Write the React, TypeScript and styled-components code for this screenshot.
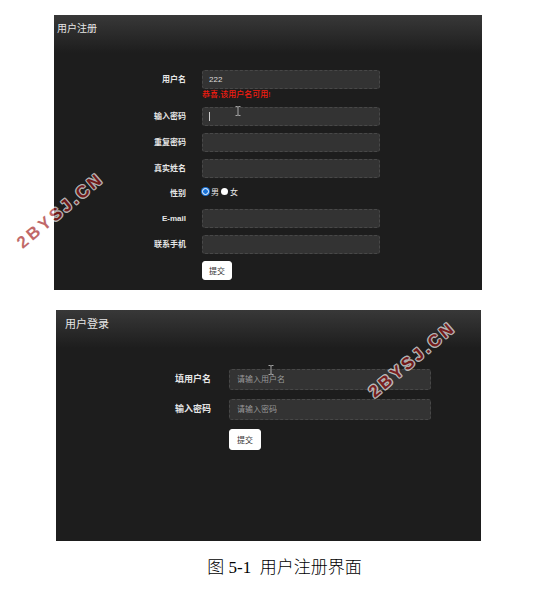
import { ReactNode } from 'react';
import styled, { createGlobalStyle } from 'styled-components';

const App = () => (
  <Page>
    <GlobalStyle />
    <RegisterPanel>
      <PanelTitle $size={10} $indent={3}>用户注册</PanelTitle>
      <RegisterForm onSubmit={e => e.preventDefault()}>
        <Label htmlFor="username">用户名</Label>
        <Field>
          <TextInput id="username" defaultValue="222" />
          <Hint>恭喜,该用户名可用!</Hint>
        </Field>
        <Label htmlFor="password">输入密码</Label>
        <Field>
          <TextInput id="password" type="password" />
          <Caret />
          <Pointer $left={33} $top={-1}><IBeam /></Pointer>
        </Field>
        <Row id="repeat" label="重复密码" type="password" />
        <Row id="realname" label="真实姓名" />
        <GroupLabel id="gender">性别</GroupLabel>
        <RadioGroup role="radiogroup" aria-labelledby="gender">
          <RadioLabel><Radio type="radio" name="gender" defaultChecked />男</RadioLabel>
          <RadioLabel><Radio type="radio" name="gender" />女</RadioLabel>
        </RadioGroup>
        <Row id="email" label="E-mail" type="email" />
        <Row id="phone" label="联系手机" type="tel" />
        <Submit type="submit">提交</Submit>
      </RegisterForm>
      <Watermark $left={-47} $top={186}>2BYSJ.CN</Watermark>
    </RegisterPanel>

    <LoginPanel>
      <PanelTitle $size={11} $indent={9}>用户登录</PanelTitle>
      <LoginForm onSubmit={e => e.preventDefault()}>
        <Label htmlFor="loginname">填用户名</Label>
        <Field>
          <TextInput id="loginname" placeholder="请输入用户名" />
          <Pointer $left={39} $top={-4}><IBeam /></Pointer>
        </Field>
        <Row id="loginpass" label="输入密码" type="password" placeholder="请输入密码" />
        <Submit type="submit">提交</Submit>
      </LoginForm>
      <Watermark $left={303} $top={40}>2BYSJ.CN</Watermark>
    </LoginPanel>

    <Caption>图 5-1  用户注册界面</Caption>
  </Page>
);

interface RowProps {
  id: string;
  label: ReactNode;
  type?: string;
  placeholder?: string;
}

const Row = ({ id, label, type = 'text', placeholder }: RowProps) => (
  <>
    <Label htmlFor={id}>{label}</Label>
    <Field>
      <TextInput id={id} type={type} placeholder={placeholder} />
    </Field>
  </>
);

const IBeam = () => (
  <svg width="6" height="10" viewBox="0 0 6 10" fill="none" stroke="#b4b4b4" aria-hidden="true">
    <path d="M0.5 0.5H2.2L3 1L3.8 0.5H5.5M3 1V9M0.5 9.5H2.2L3 9L3.8 9.5H5.5" strokeWidth="0.9" />
  </svg>
);

const GlobalStyle = createGlobalStyle`
  * {
    box-sizing: border-box;
  }

  body {
    margin: 0;
    background: #fff;
    font-family: "Liberation Sans", "Noto Sans CJK SC", sans-serif;
  }
`;

const Page = styled.main`
  padding: 15px 0 8px;
  overflow: hidden;
`;

const Panel = styled.section`
  position: relative;
  background: linear-gradient(#383838, #1d1d1d 38px);
  color: #e6e6e6;
`;

const RegisterPanel = styled(Panel)`
  margin: 0 75px 20px 54px;
  padding-bottom: 10px;
`;

const LoginPanel = styled(Panel)`
  margin: 0 76px 0 56px;
  padding-bottom: 91px;
`;

const PanelTitle = styled.h2<{ $size: number; $indent: number }>`
  margin: 0;
  padding: 6px 0 0 ${props => props.$indent}px;
  height: 38px;
  font-size: ${props => props.$size}px;
  font-weight: 400;
  line-height: 16px;
`;

const Form = styled.form`
  display: grid;
  align-items: start;
`;

const Label = styled.label`
  grid-column: 1;
  text-align: right;
  font-weight: 700;
`;

const GroupLabel = styled.span`
  grid-column: 1;
  text-align: right;
  font-weight: 700;
  line-height: 17px;
`;

const Field = styled.div`
  position: relative;
`;

const TextInput = styled.input`
  display: block;
  width: 100%;
  padding: 0 6px;
  border: 1px dashed #484848;
  border-radius: 3px;
  outline: none;
  background: #333;
  color: #ddd;
  font-family: inherit;
  font-size: 8px;

  &::placeholder {
    color: #999;
    opacity: 1;
  }
`;

const Submit = styled.button`
  grid-column: 2;
  justify-self: start;
  padding: 0 6px;
  border: 1px solid #fff;
  border-radius: 3px;
  background: #fff;
  color: #333;
  font-family: inherit;
  font-size: 8px;
`;

const RegisterForm = styled(Form)`
  grid-template-columns: 132fr 178fr 86fr;
  gap: 7px 16px;
  padding-top: 17px;
  font-size: 8px;

  ${Label} {
    line-height: 19px;
  }

  ${TextInput}, ${Submit} {
    height: 19px;
  }
`;

const LoginForm = styled(Form)`
  grid-template-columns: 155fr 202fr 32fr;
  gap: 9px 18px;
  padding-top: 21px;
  font-size: 9px;

  ${Label} {
    line-height: 21px;
  }

  ${TextInput}, ${Submit} {
    height: 21px;
    padding: 0 7px;
  }
`;

const Hint = styled.p`
  margin: 0;
  color: #f01c10;
  font-size: 8px;
  font-weight: 500;
  line-height: 11px;
`;

const Caret = styled.span`
  position: absolute;
  left: 7px;
  top: 5px;
  width: 1px;
  height: 9px;
  background: #ccc;
`;

const Pointer = styled.span<{ $left: number; $top: number }>`
  position: absolute;
  left: ${props => props.$left}px;
  top: ${props => props.$top}px;
  line-height: 0;
  pointer-events: none;
`;

const RadioGroup = styled.div`
  display: flex;
  gap: 2px;
  height: 17px;
`;

const RadioLabel = styled.label`
  display: flex;
  align-items: center;
  gap: 2px;
  height: 13px;
`;

const Radio = styled.input`
  appearance: none;
  width: 7px;
  height: 7px;
  margin: 0;
  border-radius: 50%;
  background: #fff;

  &:checked {
    border: 1px solid #fff;
    background: #1a73d8;
    box-shadow: 0 0 0 1px #1a73d8;
  }
`;

const Watermark = styled.span<{ $left: number; $top: number }>`
  position: absolute;
  left: ${props => props.$left}px;
  top: ${props => props.$top}px;
  transform: rotate(-40deg);
  color: #a01818;
  font-size: 17px;
  font-weight: 700;
  line-height: 20px;
  letter-spacing: 3px;
  white-space: nowrap;
  opacity: 0.65;
  text-shadow: 1px 0 #fff, -1px 0 #fff, 0 1px #fff, 0 -1px #fff,
    1px 1px #fff, -1px -1px #fff, 1px -1px #fff, -1px 1px #fff;
  pointer-events: none;
`;

const Caption = styled.p`
  margin: 0;
  padding: 15px 0 0 12px;
  font-family: "Liberation Serif", "Noto Sans CJK SC", serif;
  font-size: 17px;
  font-weight: 300;
  line-height: 24px;
  color: #000;
  text-align: center;
  white-space: pre;
`;

export default App;
